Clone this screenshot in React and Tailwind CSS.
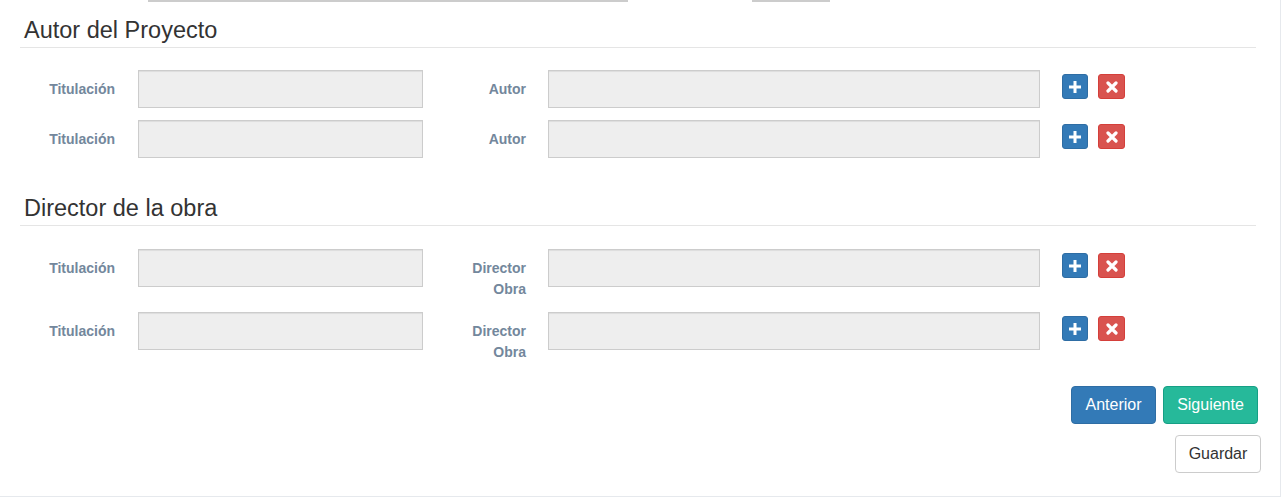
import React from "react";

const font = { fontFamily: '"Liberation Sans", Arial, sans-serif' };

function PlusIcon() {
  return (
    <svg width="12" height="12" viewBox="0 0 12 12">
      <path d="M4.5 0h3v4.5H12v3H7.5V12h-3V7.5H0v-3h4.5z" fill="#fff" />
    </svg>
  );
}

function RemoveIcon() {
  return (
    <svg width="12" height="12" viewBox="0 0 12 12">
      <path d="M2 2 L10 10 M10 2 L2 10" stroke="#fff" strokeWidth="3.2" strokeLinecap="round" />
    </svg>
  );
}

function Legend({ children, className = "" }) {
  return (
    <div className={`mx-[20px] w-[1236px] border-b border-[#e5e5e5] pb-[1px] pl-[4px] text-[23.5px] leading-[31px] text-[#333] ${className}`}>
      {children}
    </div>
  );
}

function Row({ label }) {
  const lines = label.split("\n");
  return (
    <div className="flex items-start">
      <div className="w-[115px] shrink-0 pt-[9px] text-right text-[14px] font-bold leading-[20px] text-[#73879c]">
        Titulación
      </div>
      <div className="ml-[23px] h-[38px] w-[285px] shrink-0 border border-[#ccc] bg-[#eee] shadow-[inset_0_1px_1px_rgba(0,0,0,0.075)]" />
      <div className="w-[103px] shrink-0 pt-[9px] text-right text-[14px] font-bold leading-[21px] text-[#73879c]">
        {lines.map((l) => (
          <div key={l}>{l}</div>
        ))}
      </div>
      <div className="ml-[22px] h-[38px] w-[492px] shrink-0 border border-[#ccc] bg-[#eee] shadow-[inset_0_1px_1px_rgba(0,0,0,0.075)]" />
      <div className="ml-[22px] mt-[4px] flex gap-[10px]">
        <button className="flex h-[25px] w-[26px] items-center justify-center rounded-[3px] border border-[#2e6da4] bg-[#337ab7]">
          <PlusIcon />
        </button>
        <button className="flex h-[25px] w-[27px] items-center justify-center rounded-[3px] border border-[#d43f3a] bg-[#d9534f]">
          <RemoveIcon />
        </button>
      </div>
    </div>
  );
}

export default function App() {
  return (
    <div style={font} className="h-[498px] w-[1282px] overflow-hidden bg-white">
      <div className="h-[497px] w-[1281px] border-r border-b border-[#e6e9ed]">
        {/* remnants of inputs scrolled out above */}
        <div className="flex h-[2px]">
          <div className="ml-[148px] w-[480px] border-b-2 border-[#ccc]" />
          <div className="ml-[124px] w-[78px] border-b-2 border-[#ccc]" />
        </div>

        <Legend className="mt-[13px]">Autor del Proyecto</Legend>
        <div className="mt-[22px] flex flex-col gap-[12px]">
          <Row label="Autor" />
          <Row label="Autor" />
        </div>

        <Legend className="mt-[35px]">Director de la obra</Legend>
        <div className="mt-[23px] flex flex-col gap-[12px]">
          <Row label={"Director\nObra"} />
          <Row label={"Director\nObra"} />
        </div>

        <div className="mt-[23px] flex justify-end gap-[7px] pr-[22px]">
          <button className="h-[38px] w-[85px] rounded-[4px] border border-[#2e6da4] bg-[#337ab7] text-[16px] text-white">
            Anterior
          </button>
          <button className="h-[38px] w-[95px] rounded-[4px] border border-[#169f85] bg-[#26b99a] text-[16px] text-white">
            Siguiente
          </button>
        </div>
        <div className="mt-[11px] flex justify-end pr-[19px]">
          <button className="h-[38px] w-[86px] rounded-[4px] border border-[#ccc] bg-white text-[16px] text-[#333]">
            Guardar
          </button>
        </div>
      </div>
    </div>
  );
}
